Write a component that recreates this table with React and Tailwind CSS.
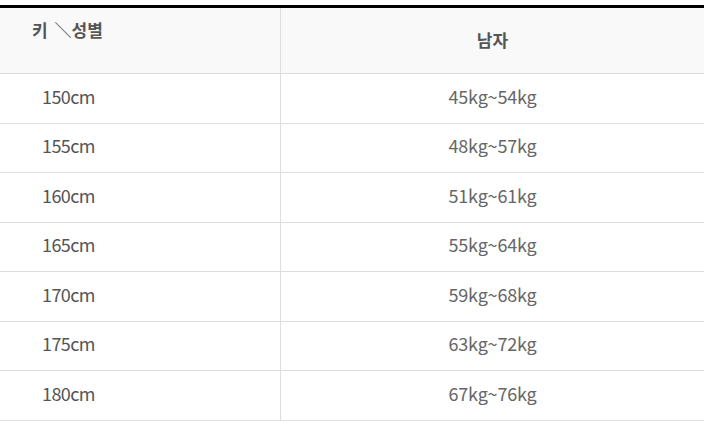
import React from "react";

const rows = [
  ["150cm", "45kg~54kg"],
  ["155cm", "48kg~57kg"],
  ["160cm", "51kg~61kg"],
  ["165cm", "55kg~64kg"],
  ["170cm", "59kg~68kg"],
  ["175cm", "63kg~72kg"],
  ["180cm", "67kg~76kg"],
];

export default function App() {
  return (
    <div
      className="w-[704px] h-[429px] bg-white pt-[5px]"
      style={{ fontFamily: '"Noto Sans CJK KR", "Noto Sans", sans-serif' }}
    >
      <div className="border-t-[3px] border-black">
        {/* header */}
        <div className="flex h-[66px] bg-[#f9f9f9] border-b border-[#dddddd]">
          <div className="w-[281px] shrink-0 border-r border-[#dddddd] pl-[32px] pt-[9px] text-[17px] font-bold text-[#555]">
            키 <span className="ml-[3px]">＼</span>성별
          </div>
          <div className="flex-1 flex items-center justify-center pb-[2px] text-[17px] font-bold text-[#555]">
            남자
          </div>
        </div>
        {/* body */}
        {rows.map(([height, weight], i) => (
          <div
            key={height}
            className={`flex border-b border-[#dddddd] ${i % 2 === 0 ? "h-[50px]" : "h-[49px]"}`}
          >
            <div className="w-[281px] shrink-0 border-r border-[#dddddd] pl-[42px] pb-[5px] flex items-center text-[18px] text-[#555] tracking-[-0.6px]">
              {height}
            </div>
            <div className="flex-1 flex items-center justify-center pb-[5px] text-[18px] text-[#666] tracking-[-0.2px]">
              {weight}
            </div>
          </div>
        ))}
      </div>
    </div>
  );
}
